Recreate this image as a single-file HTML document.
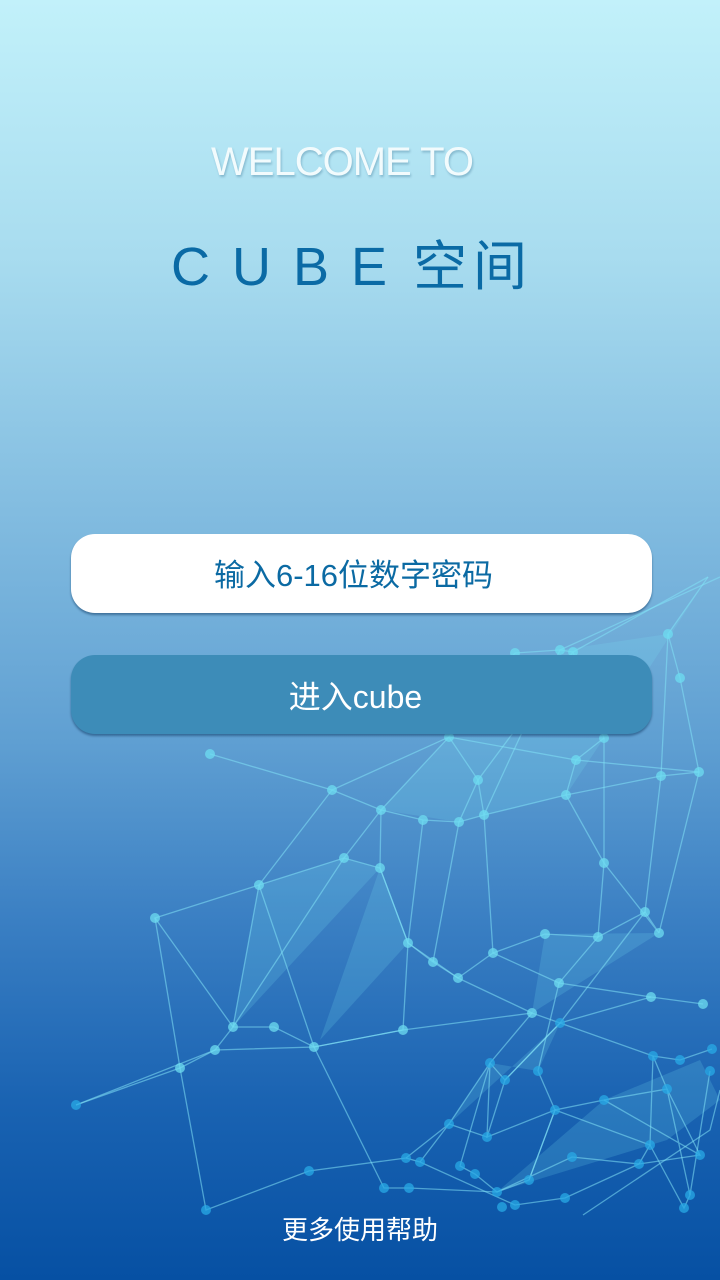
<!DOCTYPE html>
<html><head><meta charset="utf-8"><style>
html,body{margin:0;padding:0}
body{width:720px;height:1280px;position:relative;overflow:hidden;
background:linear-gradient(180deg,#c2f1fa 0%,#a8dcef 20%,#82bce0 40%,#5f9fd2 58%,#3a7fc3 72%,#1a63b2 86%,#0650a3 100%);
font-family:"Liberation Sans","Noto Sans CJK SC",sans-serif}
.t{position:absolute;left:0;width:720px;text-align:center}
.w{top:140px;left:-18px;font-size:40px;color:#f2fbfd;letter-spacing:-1px;text-shadow:1px 2px 2px rgba(0,60,100,.25);font-weight:300}
.c{top:222px;left:-8px;font-size:54px;color:#0a6aa5;letter-spacing:22px;font-weight:300}
.b{position:absolute;left:71px;width:581px;height:79px;border-radius:24px;text-align:center;line-height:84px;font-size:31px;box-sizing:border-box;padding-right:16px}
.b1{top:534px;background:#fff;color:#0b6aa3;box-shadow:0 2px 2px rgba(0,40,80,.45)}
.b2{top:655px;background:#3d8cb8;color:#fff;box-shadow:0 2px 2px rgba(0,40,80,.45);font-size:32px;padding-right:12px}
.h{top:1210px;font-size:26px;color:#fff}
svg{position:absolute;left:0;top:0}
</style></head><body>
<svg width="720" height="1280" viewBox="0 0 720 1280">
<g fill="rgba(120,230,245,.18)">
<polygon points="381,810 459,822 484,815 566,795 604,738 449,737"/>
<polygon points="259,885 344,858 380,868 233,1027"/>
<polygon points="380,868 408,943 320,1040"/>
<polygon points="490,1063 538,1071 560,1023 449,1124"/>
<polygon points="604,1100 700,1060 720,1100 667,1140 497,1192"/>
<polygon points="560,650 668,634 708,577 604,738"/>
<polygon points="545,934 659,933 532,1013"/>
</g>
<g stroke="rgba(130,225,245,.55)" stroke-width="1.3" fill="none">
<polyline points="210,754 332,790 381,810 423,820 459,822 484,815 566,795 661,776 699,772 680,678 668,634 708,577"/>
<polyline points="515,653 560,650 573,652 604,738 576,760 566,795 604,863 659,933 645,912 598,937 545,934 493,953 458,978 433,962 408,943 380,868 344,858 259,885 155,918 233,1027 274,1027 314,1047 403,1030 532,1013 560,1023 651,997 703,1004"/>
<polyline points="449,737 478,780 484,815 493,953 559,983 651,997"/>
<polyline points="381,810 380,868 408,943 403,1030 314,1047 384,1188 409,1188 497,1192 572,1157 639,1164 700,1155"/>
<polyline points="155,918 180,1068 215,1050 233,1027 259,885 332,790 449,737 576,760 699,772 659,933"/>
<polyline points="76,1105 215,1050 314,1047 259,885"/>
<polyline points="76,1105 180,1068 206,1210 309,1171 406,1158 449,1124 490,1063 505,1080 560,1023 653,1056 680,1060 712,1049"/>
<polyline points="490,1063 460,1166 475,1174 497,1192 529,1180 555,1110 604,1100 667,1089 653,1056 650,1145 684,1208 690,1195 710,1071"/>
<polyline points="538,1071 555,1110 650,1145 639,1164 565,1198 515,1205 420,1162 406,1158"/>
<polyline points="604,1100 700,1155 667,1089 690,1195"/>
<polyline points="583,1215 710,1130 720,1090"/>
<polyline points="423,820 408,943 458,978 532,1013 490,1063 487,1137 449,1124 420,1162"/>
<polyline points="604,738 604,863 598,937 559,983 538,1071"/>
<polyline points="668,634 661,776 645,912 560,1023 505,1080 487,1137 555,1110 529,1180"/>
<polyline points="515,653 449,737 381,810 344,858 233,1027"/>
<polyline points="708,577 573,652 478,780 459,822 433,962"/>
<polyline points="720,577 560,650 484,815"/>
</g>
<g fill="rgba(110,220,240,.75)">
<circle cx="210" cy="754" r="5"/><circle cx="332" cy="790" r="5"/><circle cx="381" cy="810" r="5"/><circle cx="423" cy="820" r="5"/><circle cx="459" cy="822" r="5"/><circle cx="484" cy="815" r="5"/><circle cx="566" cy="795" r="5"/><circle cx="576" cy="760" r="5"/><circle cx="604" cy="738" r="5"/><circle cx="661" cy="776" r="5"/><circle cx="699" cy="772" r="5"/><circle cx="680" cy="678" r="5"/><circle cx="668" cy="634" r="5"/><circle cx="515" cy="653" r="5"/><circle cx="560" cy="650" r="5"/><circle cx="573" cy="652" r="5"/><circle cx="449" cy="737" r="5"/><circle cx="478" cy="780" r="5"/><circle cx="344" cy="858" r="5"/><circle cx="380" cy="868" r="5"/><circle cx="259" cy="885" r="5"/><circle cx="155" cy="918" r="5"/><circle cx="604" cy="863" r="5"/><circle cx="408" cy="943" r="5"/><circle cx="433" cy="962" r="5"/><circle cx="458" cy="978" r="5"/><circle cx="493" cy="953" r="5"/><circle cx="545" cy="934" r="5"/><circle cx="598" cy="937" r="5"/><circle cx="645" cy="912" r="5"/><circle cx="659" cy="933" r="5"/><circle cx="703" cy="1004" r="5"/><circle cx="651" cy="997" r="5"/><circle cx="559" cy="983" r="5"/><circle cx="532" cy="1013" r="5"/><circle cx="403" cy="1030" r="5"/><circle cx="314" cy="1047" r="5"/><circle cx="274" cy="1027" r="5"/><circle cx="233" cy="1027" r="5"/><circle cx="215" cy="1050" r="5"/><circle cx="180" cy="1068" r="5"/>
</g>
<g fill="rgba(40,170,230,.75)">
<circle cx="76" cy="1105" r="5"/><circle cx="206" cy="1210" r="5"/><circle cx="309" cy="1171" r="5"/><circle cx="384" cy="1188" r="5"/><circle cx="409" cy="1188" r="5"/><circle cx="406" cy="1158" r="5"/><circle cx="420" cy="1162" r="5"/><circle cx="449" cy="1124" r="5"/><circle cx="490" cy="1063" r="5"/><circle cx="505" cy="1080" r="5"/><circle cx="538" cy="1071" r="5"/><circle cx="560" cy="1023" r="5"/><circle cx="555" cy="1110" r="5"/><circle cx="653" cy="1056" r="5"/><circle cx="680" cy="1060" r="5"/><circle cx="712" cy="1049" r="5"/><circle cx="710" cy="1071" r="5"/><circle cx="604" cy="1100" r="5"/><circle cx="667" cy="1089" r="5"/><circle cx="650" cy="1145" r="5"/><circle cx="639" cy="1164" r="5"/><circle cx="700" cy="1155" r="5"/><circle cx="690" cy="1195" r="5"/><circle cx="684" cy="1208" r="5"/><circle cx="497" cy="1192" r="5"/><circle cx="515" cy="1205" r="5"/><circle cx="529" cy="1180" r="5"/><circle cx="572" cy="1157" r="5"/><circle cx="565" cy="1198" r="5"/><circle cx="475" cy="1174" r="5"/><circle cx="460" cy="1166" r="5"/><circle cx="487" cy="1137" r="5"/><circle cx="502" cy="1207" r="5"/>
</g>
</svg>
<div class="t w">WELCOME TO</div>
<div class="t c">CUBE<span style="letter-spacing:6px;margin-left:4px;font-weight:400">空间</span></div>
<div class="b b1">输入6-16位数字密码</div>
<div class="b b2">进入cube</div>
<div class="t h">更多使用帮助</div>
</body></html>
